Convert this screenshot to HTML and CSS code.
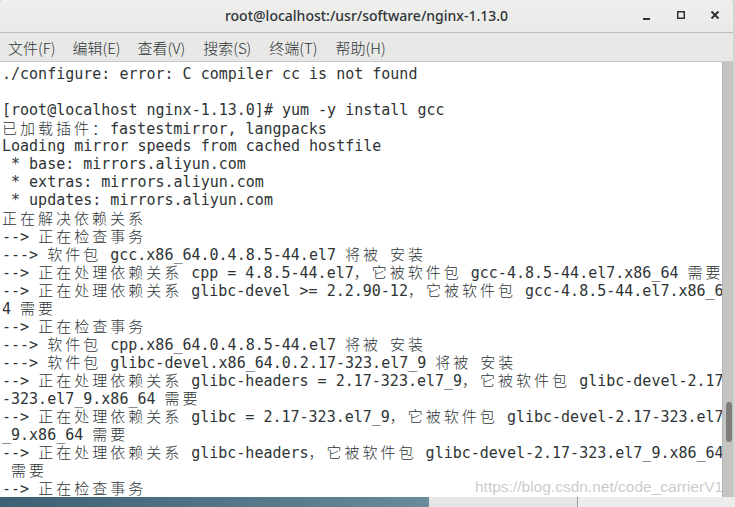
FILE: index.html
```html
<!DOCTYPE html>
<html lang="zh-CN">
<head>
  <meta charset="UTF-8" />
  <title>root@localhost:/usr/software/nginx-1.13.0</title>
  <link rel="stylesheet" href="styles.css">
</head>
<body>
  <div class="window">
    <div class="titlebar">
      <div class="title">root@localhost:/usr/software/nginx-1.13.0</div>
      <div class="controls">
        <svg class="ctl" width="12" height="12" viewBox="0 0 12 12"><rect x="2" y="9" width="7" height="2" fill="#2e3436"/></svg>
        <svg class="ctl" width="12" height="12" viewBox="0 0 12 12"><rect x="2.75" y="2.75" width="6.5" height="6.5" fill="none" stroke="#2e3436" stroke-width="1.5"/></svg>
        <svg class="ctl" width="12" height="12" viewBox="0 0 12 12"><path d="M2.5 2.5 L9.5 9.5 M9.5 2.5 L2.5 9.5" stroke="#2e3436" stroke-width="2"/></svg>
      </div>
    </div>

    <div class="menubar">
      <span class="menu">文件(F)</span>
      <span class="menu">编辑(E)</span>
      <span class="menu">查看(V)</span>
      <span class="menu">搜索(S)</span>
      <span class="menu">终端(T)</span>
      <span class="menu">帮助(H)</span>
    </div>

    <div class="term">
      <div class="screen">
        <div class="ln">./configure: error: C compiler cc is not found</div>
        <div class="ln"></div>
        <div class="ln">[root@localhost nginx-1.13.0]# yum -y install gcc</div>
        <div class="ln"><span class="c">已加载插件：</span>fastestmirror, langpacks</div>
        <div class="ln">Loading mirror speeds from cached hostfile</div>
        <div class="ln"> * base: mirrors.aliyun.com</div>
        <div class="ln"> * extras: mirrors.aliyun.com</div>
        <div class="ln"> * updates: mirrors.aliyun.com</div>
        <div class="ln"><span class="c">正在解决依赖关系</span></div>
        <div class="ln">--&gt; <span class="c">正在检查事务</span></div>
        <div class="ln">---&gt; <span class="c">软件包</span> gcc.x86_64.0.4.8.5-44.el7 <span class="c">将被</span> <span class="c">安装</span></div>
        <div class="ln">--&gt; <span class="c">正在处理依赖关系</span> cpp = 4.8.5-44.el7<span class="c">，它被软件包</span> gcc-4.8.5-44.el7.x86_64 <span class="c">需要</span></div>
        <div class="ln">--&gt; <span class="c">正在处理依赖关系</span> glibc-devel &gt;= 2.2.90-12<span class="c">，它被软件包</span> gcc-4.8.5-44.el7.x86_6</div>
        <div class="ln">4 <span class="c">需要</span></div>
        <div class="ln">--&gt; <span class="c">正在检查事务</span></div>
        <div class="ln">---&gt; <span class="c">软件包</span> cpp.x86_64.0.4.8.5-44.el7 <span class="c">将被</span> <span class="c">安装</span></div>
        <div class="ln">---&gt; <span class="c">软件包</span> glibc-devel.x86_64.0.2.17-323.el7_9 <span class="c">将被</span> <span class="c">安装</span></div>
        <div class="ln">--&gt; <span class="c">正在处理依赖关系</span> glibc-headers = 2.17-323.el7_9<span class="c">，它被软件包</span> glibc-devel-2.17</div>
        <div class="ln">-323.el7_9.x86_64 <span class="c">需要</span></div>
        <div class="ln">--&gt; <span class="c">正在处理依赖关系</span> glibc = 2.17-323.el7_9<span class="c">，它被软件包</span> glibc-devel-2.17-323.el7</div>
        <div class="ln">_9.x86_64 <span class="c">需要</span></div>
        <div class="ln">--&gt; <span class="c">正在处理依赖关系</span> glibc-headers<span class="c">，它被软件包</span> glibc-devel-2.17-323.el7_9.x86_64</div>
        <div class="ln"> <span class="c">需要</span></div>
        <div class="ln">--&gt; <span class="c">正在检查事务</span></div>
      </div>
      <div class="scrollbar"><div class="thumb"></div></div>
      <div class="watermark">https://blog.csdn.net/code_carrierV1</div>
    </div>
  </div>
  <div class="desk">
    <div class="desk-bg"></div>
    <div class="panel"><div class="panel-a"></div><div class="panel-b"></div></div>
  </div>
</body>
</html>
```

FILE: styles.css
```css
body { margin: 0; width: 735px; height: 507px; background: #d4d4d2; overflow: hidden; }

.window {
  width: 733px; height: 497px; display: flex; flex-direction: column;
  background: #fff; border-top-left-radius: 4px; border-top-right-radius: 4px; overflow: hidden;
}

.titlebar {
  height: 32px; flex-shrink: 0; display: flex; align-items: center; justify-content: center;
  background: linear-gradient(#efefee, #e9e9e8); border-bottom: 1px solid #bdbdbb;
  position: relative;
}
.title {
  font-family: "Noto Sans", sans-serif; font-size: 14px; font-weight: 500; color: #2e3436;
  margin-top: -1px;
}
.controls {
  position: absolute; right: 12px; top: 9px; display: flex; gap: 22px;
}
.ctl { display: block; }

.menubar {
  height: 28px; flex-shrink: 0; display: flex; align-items: center; padding-left: 8px;
  background: #e8e8e7; border-bottom: 1px solid #c9c9c7;
  font-family: "Noto Sans CJK SC", sans-serif; font-size: 15px; font-weight: 300; color: #2e3436;
}
.menu { margin-right: 17px; }
.menu:nth-child(n+4) { margin-left: 1px; }

.term { flex: 1; min-height: 0; display: flex; position: relative; background: #fff; }
.screen {
  width: 720px; padding: 3px 0 0 2px; color: #2e3436;
  font-family: "DejaVu Sans Mono", monospace; font-size: 15px;
}
.ln { height: 18px; line-height: 18px; white-space: pre; }
.c {
  font-family: "Noto Sans CJK SC", sans-serif; font-size: 15px; font-weight: 300; letter-spacing: 3px;
  line-height: 18px;
}

.scrollbar {
  width: 11px; background: #c4c4c2; border-left: 1px solid #b4b4b2; margin-left: auto; position: relative;
}
.thumb {
  position: absolute; left: 3px; top: 340px; width: 6px; height: 40px;
  background: #7e7e7c; border-radius: 3px;
}

.watermark {
  position: absolute; left: 475px; bottom: 1px;
  font-family: "Liberation Sans", Arial, sans-serif; font-size: 15.5px; color: rgba(185,185,185,0.75);
}

.desk { height: 10px; display: flex; }
.desk-bg { width: 429px; background: linear-gradient(90deg, #3c6174, #55788a 60%, #6a8b99); }
.panel { flex: 1; display: flex; background: #e6e6e5; }
.panel-a { width: 148px; border-right: 1px solid #9a9a98; }
.panel-b { flex: 1; background: #ececeb; }
```
